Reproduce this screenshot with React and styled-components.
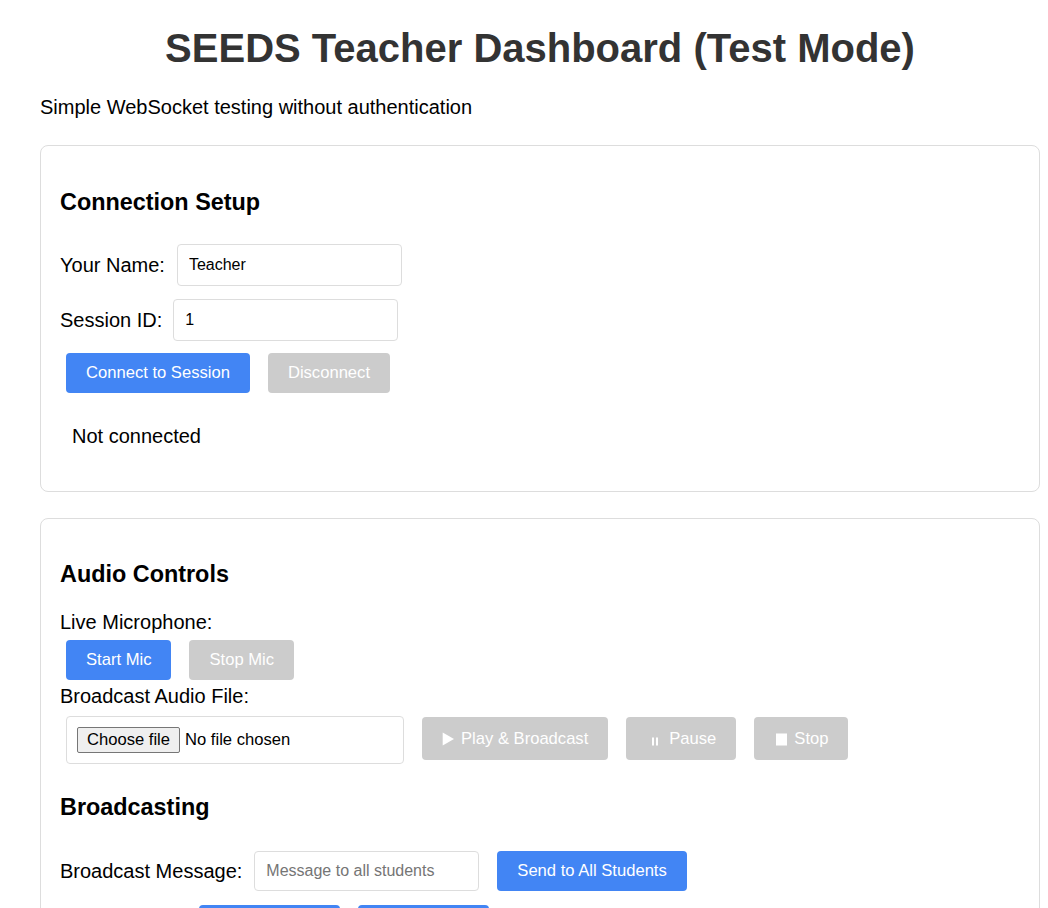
import React from "react";
import styled, { createGlobalStyle } from "styled-components";

const GlobalStyle = createGlobalStyle`
    html, body {
        margin: 0;
        padding: 0;
        background: #ffffff;
    }
    body {
        font-family: "Liberation Sans", Arial, sans-serif;
        font-size: 20px;
        color: #000000;
    }
`;

const Page = styled.div`
    width: 1000px;
    margin-left: 40px;
    padding-top: 25px;
`;

const Title = styled.h1`
    margin: 0;
    font-size: 40px;
    line-height: 46px;
    font-weight: 700;
    color: #333333;
    text-align: center;
`;

const Subtitle = styled.p`
    margin: 25px 0 0;
    line-height: 23px;
`;

const Card = styled.section`
    margin-top: ${({ $top }) => $top}px;
    border: 1px solid #dddddd;
    border-radius: 8px;
    padding: 20px 20px 20px 19px;
`;

const Heading = styled.h3`
    margin: ${({ $top }) => $top}px 0 0;
    font-size: 23.4px;
    line-height: 27px;
    font-weight: 700;
`;

const FieldRow = styled.div`
    display: flex;
    align-items: center;
    gap: ${({ $gap }) => $gap || 12}px;
    margin-top: ${({ $top }) => $top}px;
`;

const Label = styled.label`
    line-height: 23px;
`;

const TextInput = styled.input`
    box-sizing: border-box;
    width: 225px;
    height: ${({ $h }) => $h || 42}px;
    padding: 0 11px;
    border: 1px solid #dddddd;
    border-radius: 4px;
    font-family: "Liberation Sans", Arial, sans-serif;
    font-size: 16px;
    color: #000000;
    outline: none;

    &::placeholder {
        color: #757575;
    }
`;

const ButtonRow = styled.div`
    display: flex;
    align-items: ${({ $align }) => $align || "center"};
    gap: 18px;
    padding-left: 6px;
    margin-top: ${({ $top }) => $top}px;
`;

const Button = styled.button`
    display: inline-flex;
    align-items: center;
    gap: 6px;
    height: ${({ $h }) => $h || 40}px;
    padding: 0 20px;
    margin-left: ${({ $shift }) => $shift || 0}px;
    border: none;
    border-radius: 4px;
    background: ${({ disabled }) => (disabled ? "#cccccc" : "#4285f4")};
    color: #ffffff;
    font-family: "Liberation Sans", Arial, sans-serif;
    font-size: 16.6px;
    cursor: ${({ disabled }) => (disabled ? "default" : "pointer")};
`;

const Status = styled.div`
    margin: 20px 0 11px;
    padding: 12px;
    line-height: 23px;
`;

const LineLabel = styled.div`
    margin-top: ${({ $top }) => $top}px;
    line-height: 23px;
`;

const FileBox = styled.label`
    box-sizing: border-box;
    width: 338px;
    height: 48px;
    margin-top: -1px;
    padding: 0 10px;
    display: flex;
    align-items: center;
    gap: 5px;
    border: 1px solid #dddddd;
    border-radius: 4px;
    font-size: 16.6px;

    input {
        display: none;
    }
`;

const FileButton = styled.span`
    box-sizing: border-box;
    height: 26px;
    padding: 0 9px;
    display: inline-flex;
    align-items: center;
    border: 1px solid #767676;
    border-radius: 2px;
    background: #efefef;
`;

const PlayIcon = () => (
    <svg width="13" height="14" viewBox="0 0 13 14">
        <polygon points="0.7,0.5 12,7 0.7,13.5" fill="#ffffff" />
    </svg>
);

const PauseIcon = () => (
    <svg width="17" height="14" viewBox="0 0 17 14">
        <rect x="6" y="5.5" width="2" height="8" fill="#ffffff" />
        <rect x="10" y="5.5" width="2" height="8" fill="#ffffff" />
    </svg>
);

const StopIcon = () => (
    <svg width="14" height="14" viewBox="0 0 14 14">
        <rect x="2" y="1.5" width="11" height="12" fill="#ffffff" />
    </svg>
);

function App() {
    return (
        <>
            <GlobalStyle />
            <Page>
                <Title>SEEDS Teacher Dashboard (Test Mode)</Title>
                <Subtitle>Simple WebSocket testing without authentication</Subtitle>

                <Card $top={26}>
                    <Heading $top={23}>Connection Setup</Heading>
                    <FieldRow $top={28}>
                        <Label>Your Name:</Label>
                        <TextInput defaultValue="Teacher" />
                    </FieldRow>
                    <FieldRow $top={13} $gap={11}>
                        <Label>Session ID:</Label>
                        <TextInput defaultValue="1" />
                    </FieldRow>
                    <ButtonRow $top={12}>
                        <Button>Connect to Session</Button>
                        <Button disabled>Disconnect</Button>
                    </ButtonRow>
                    <Status>Not connected</Status>
                </Card>

                <Card $top={26}>
                    <Heading $top={22}>Audio Controls</Heading>
                    <LineLabel $top={23}>Live Microphone:</LineLabel>
                    <ButtonRow $top={6}>
                        <Button>Start Mic</Button>
                        <Button disabled>Stop Mic</Button>
                    </ButtonRow>
                    <LineLabel $top={5}>Broadcast Audio File:</LineLabel>
                    <ButtonRow $top={9} $align="flex-start">
                        <FileBox>
                            <input type="file" accept="audio/*" />
                            <FileButton>Choose file</FileButton>
                            <span>No file chosen</span>
                        </FileBox>
                        <Button disabled $h={43}><PlayIcon />Play &amp; Broadcast</Button>
                        <Button disabled $h={43}><PauseIcon />Pause</Button>
                        <Button disabled $h={43}><StopIcon />Stop</Button>
                    </ButtonRow>

                    <Heading $top={30}>Broadcasting</Heading>
                    <FieldRow $top={30}>
                        <Label>Broadcast Message:</Label>
                        <TextInput $h={40} placeholder="Message to all students" />
                        <Button $shift={6}>Send to All Students</Button>
                    </FieldRow>
                    <FieldRow $top={14}>
                        <Label>Quick Actions:</Label>
                        <Button>Share Screen</Button>
                        <Button $shift={6}>Start Activity</Button>
                    </FieldRow>
                </Card>
            </Page>
        </>
    );
}

export default App;
